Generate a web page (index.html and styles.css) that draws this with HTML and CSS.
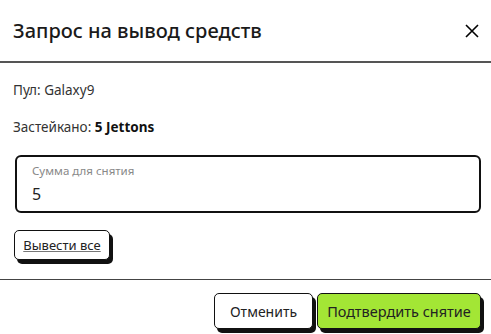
FILE: index.html
```html
<!DOCTYPE html>
<html lang="ru">
<head>
<meta charset="UTF-8" />
<title>Запрос на вывод средств</title>
<link rel="stylesheet" href="styles.css">
</head>
<body>

<div class="modal">
  <div class="modal-header">
    <h2 class="modal-title">Запрос на вывод средств</h2>
    <button class="close" aria-label="Закрыть">
      <svg width="14" height="14" viewBox="0 0 14 14"><path d="M1 1L13 13M13 1L1 13" stroke="#000" stroke-width="1.6" fill="none"/></svg>
    </button>
  </div>

  <div class="modal-body">
    <p class="info">Пул: Galaxy9</p>
    <p class="info">Застейкано: <b>5 Jettons</b></p>

    <label class="field">
      <span class="field-label">Сумма для снятия</span>
      <input type="text" class="field-input" value="5" />
    </label>

    <button class="btn btn-small"><u>Вывести все</u></button>
  </div>

  <div class="modal-footer">
    <button class="btn btn-cancel">Отменить</button>
    <button class="btn btn-green">Подтвердить снятие</button>
  </div>
</div>

</body>
</html>
```

FILE: styles.css
```css
* {
  box-sizing: border-box;
}
body {
  margin: 0;
  background: #fff;
  font-family: "Noto Sans", "Open Sans", sans-serif;
  color: #222;
}
.modal {
  width: 491px;
  height: 334px;
  overflow: hidden;
}
.modal-header {
  height: 63px;
  display: flex;
  align-items: center;
  justify-content: space-between;
  padding: 0 10px 0 13px;
  border-bottom: 2px solid #555;
}
.modal-title {
  margin: 0;
  font-size: 20px;
  font-weight: 500;
  color: #1a1a1a;
}
.close {
  border: none;
  background: none;
  padding: 2px;
  cursor: pointer;
  display: flex;
}
.modal-body {
  padding: 18px 10px 19px 13px;
  border-bottom: 1px solid #444;
}
.info {
  margin: 0 0 18px;
  font-size: 13.5px;
  line-height: 19px;
  color: #333;
}
.info b {
  color: #111;
}
.field {
  display: flex;
  flex-direction: column;
  margin: 0 0 17px 2px;
  height: 58px;
  border: 2px solid #111;
  border-radius: 6px;
  padding: 6px 15px 0;
}
.field-label {
  font-size: 11.5px;
  line-height: 16px;
  color: #888;
}
.field-input {
  border: none;
  outline: none;
  padding: 0;
  margin-top: 4px;
  font-family: inherit;
  font-size: 16px;
  color: #222;
}
.btn {
  font-family: inherit;
  font-size: 14px;
  color: #222;
  background: #fff;
  border: 1.5px solid #111;
  border-radius: 5px;
  box-shadow: 3px 4px 0 #111;
  height: 36px;
  padding: 0;
  cursor: pointer;
}
.btn-small {
  display: block;
  width: 96px;
  height: 30px;
  font-size: 13px;
  margin-left: 1px;
}
.btn-small u {
  text-decoration-color: #777;
}
.btn-cancel {
  width: 99px;
}
.btn-green {
  width: 164px;
  background: #a3e635;
  font-size: 14.5px;
}
.modal-footer {
  display: flex;
  justify-content: flex-end;
  gap: 4px;
  padding: 13px 10px 0 10px;
}
```
